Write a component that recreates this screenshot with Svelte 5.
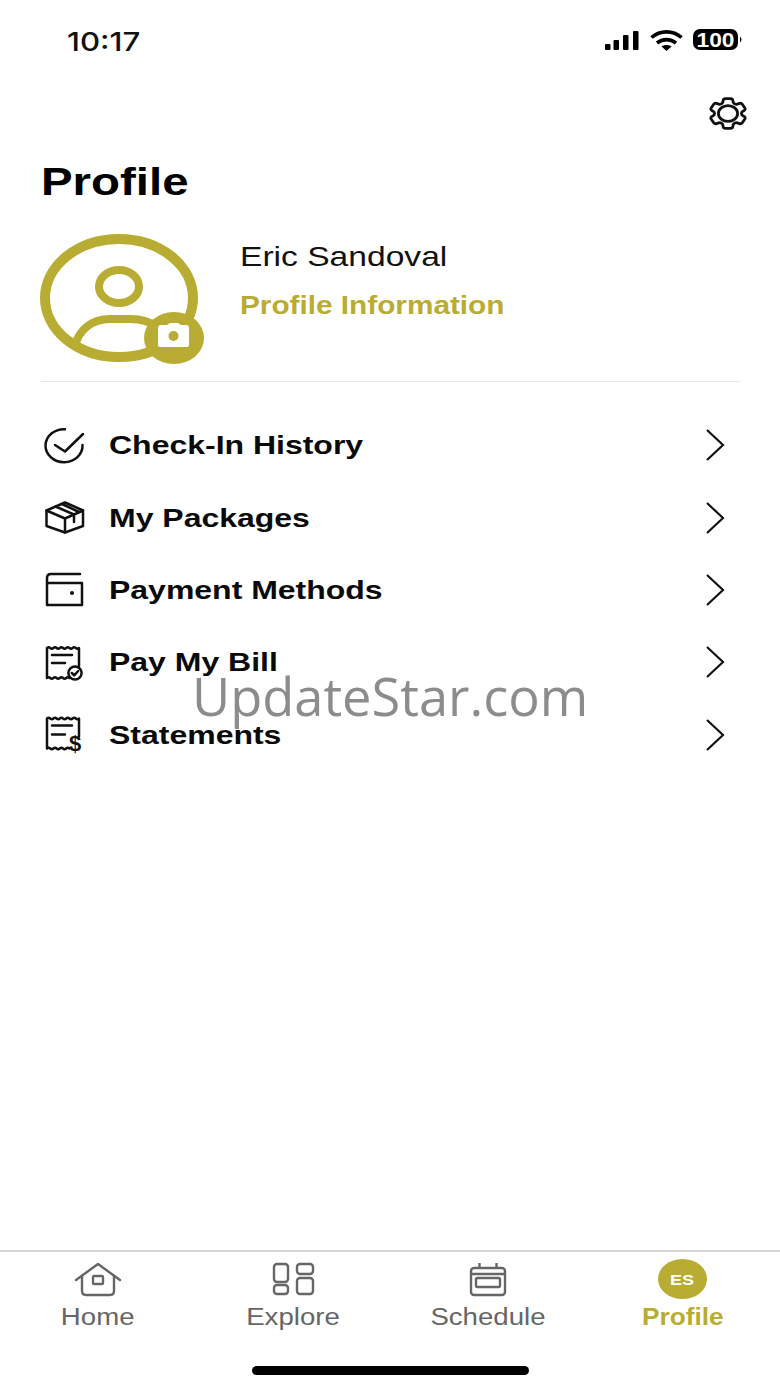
<script>
  const rows = [
    { label: "Check-In History", icon: "check" },
    { label: "My Packages", icon: "box" },
    { label: "Payment Methods", icon: "wallet" },
    { label: "Pay My Bill", icon: "bill" },
    { label: "Statements", icon: "statement" },
  ];

  const receipt =
    "M4 6 q1.600 -1.400 3.200 0 t3.200 0 t3.200 0 t3.200 0 t3.200 0 t3.200 0 t3.200 0 t3.200 0 t3.200 0 t3.200 0 V24 M4 6 V36 q1.600 -1.400 3.200 0 t3.200 0 t3.200 0 t3.200 0 t3.200 0 t3.200 0 t3.200 0";
</script>

{#snippet rowIcon(name)}
  <svg class="row-icon" viewBox="0 0 44 40" width="44" height="40" fill="none" stroke="#111" stroke-width="2.500" stroke-linejoin="round" stroke-linecap="round">
    {#if name === "check"}
      <path d="M22 4.200A18.500 16.500 0 1 0 39.500 20" />
      <path d="M12 20l10 6.500L40 9" />
    {:else if name === "box"}
      <path d="M22 4.500L40 12.500V28L22 34.500L3.500 28V12.500Z" />
      <path d="M3.500 12.500L22 20.500L40 12.500M22 20.500V34.500" />
      <path d="M12.500 8.500L31 16.500V24M19 6L36 14" />
    {:else if name === "wallet"}
      <path d="M37 4H8Q4 4 4 8V35H39V13H4" />
      <circle cx="29" cy="23" r="2" fill="#111" stroke="none" />
    {:else if name === "bill"}
      <path d={receipt} />
      <path d="M9 13H29M9 21H22" />
      <circle cx="32" cy="31" r="6.600" />
      <path d="M28.800 31l2.400 2.400l4 -4.400" />
    {:else}
      <g transform="translate(0 -2.500)">
        <path d={receipt} />
        <path d="M9 13H29M9 22H22" />
      </g>
      <text class="dollar" x="32" y="36" text-anchor="middle">$</text>
    {/if}
  </svg>
{/snippet}

<div class="page">
  <div class="status">
    <span class="time"><span class="wide">10:17</span></span>
    <svg class="status-icons" viewBox="0 0 140 24" width="140" height="24">
      <rect x="0" y="15" width="5.500" height="6" rx="1" />
      <rect x="8.500" y="11" width="5.500" height="10" rx="1" />
      <rect x="18" y="6" width="5.500" height="15" rx="1" />
      <rect x="28" y="2" width="5.500" height="19" rx="1" />
      <g fill="none" stroke="#000" stroke-width="3.600">
        <path d="M46.500 8.500C55 1 68 1 76.500 8.500" />
        <path d="M52 14C57.500 9.500 65.500 9.500 71 14" />
      </g>
      <path d="M56.500 17.500C59.500 15.500 63.500 15.500 66.500 17.500L61.500 22Z" />
      <rect x="88" y="0" width="45" height="21" rx="7" />
      <path d="M135 7.500Q138 10.500 135 13.500Z" />
      <text class="batt" x="91.500" y="17.500" textLength="38" lengthAdjust="spacingAndGlyphs">100</text>
    </svg>
  </div>

  <div class="top-row">
    <svg viewBox="2 2 20 20" width="40" height="33" preserveAspectRatio="none" fill="none" stroke="#111" stroke-linejoin="round">
      <path vector-effect="non-scaling-stroke" stroke-width="2.800" d="M9.594 3.940c.09-.542.56-.94 1.110-.94h2.593c.55 0 1.020.398 1.110.94l.213 1.281c.063.374.313.686.645.870.074.04.147.083.22.127.325.196.72.257 1.075.124l1.217-.456a1.125 1.125 0 0 1 1.370.49l1.296 2.247a1.125 1.125 0 0 1-.26 1.431l-1.003.827c-.293.241-.438.613-.43.992a7.723 7.723 0 0 1 0 .255c-.008.378.137.75.43.991l1.004.827c.424.35.534.955.26 1.430l-1.298 2.247a1.125 1.125 0 0 1-1.369.491l-1.217-.456c-.355-.133-.75-.072-1.076.124a6.470 6.470 0 0 1-.22.128c-.331.183-.581.495-.644.869l-.213 1.281c-.09.543-.56.94-1.110.94h-2.594c-.55 0-1.019-.398-1.110-.94l-.213-1.281c-.062-.374-.312-.686-.644-.870a6.520 6.520 0 0 1-.22-.127c-.325-.196-.72-.257-1.076-.124l-1.217.456a1.125 1.125 0 0 1-1.369-.49l-1.297-2.247a1.125 1.125 0 0 1 .26-1.431l1.004-.827c.292-.24.437-.613.43-.991a6.932 6.932 0 0 1 0-.255c.007-.38-.138-.751-.43-.992l-1.004-.827a1.125 1.125 0 0 1-.26-1.430l1.297-2.247a1.125 1.125 0 0 1 1.370-.491l1.216.456c.356.133.751.072 1.076-.124.072-.044.146-.086.22-.128.332-.183.582-.495.644-.869l.214-1.280Z" />
      <ellipse vector-effect="non-scaling-stroke" stroke-width="2.800" cx="12" cy="12" rx="4.800" ry="4.800" />
    </svg>
  </div>

  <h1 class="title"><span class="wide">Profile</span></h1>

  <div class="profile">
    <svg class="avatar" viewBox="0 0 164 130" width="164" height="130" fill="none" stroke="#b9ac32">
      <ellipse cx="79" cy="64" rx="74" ry="59" stroke-width="10" />
      <ellipse cx="79" cy="52.500" rx="20" ry="16.500" stroke-width="8" />
      <path d="M35 113C38 96 52 85 70 85H90C100 85 110 87 118 94" stroke-width="8" />
      <ellipse cx="134" cy="104" rx="30" ry="26" fill="#b9ac32" stroke="none" />
      <path d="M118 94Q118 91 121 91H127L130 89H138L141 91H146Q149 91 149 94V111Q149 113 146 113H121Q118 113 118 111Z" fill="#fff" stroke="none" />
      <circle cx="133.500" cy="102" r="5" fill="#b9ac32" stroke="none" />
    </svg>
    <div class="info">
      <div class="name"><span class="wide">Eric Sandoval</span></div>
      <div class="link"><span class="wide">Profile Information</span></div>
    </div>
  </div>

  <div class="divider"></div>

  <div class="list">
    {#each rows as row}
      <div class="row">
        {@render rowIcon(row.icon)}
        <span class="row-label"><span class="wide">{row.label}</span></span>
        <svg class="chev" viewBox="0 0 20 34" width="20" height="34" fill="none" stroke="#111" stroke-width="2.200">
          <path d="M2 2L18 17L2 32" />
        </svg>
      </div>
    {/each}
  </div>

  <nav class="tabs">
    <div class="tab">
      <svg viewBox="0 0 50 40" width="50" height="40" fill="none" stroke="#666" stroke-width="2.400" stroke-linejoin="round" stroke-linecap="round">
        <path d="M3 20L25 4L47 20" />
        <path d="M9 16V31Q9 35 13 35H37Q41 35 41 31V16" />
        <rect x="20" y="16" width="10" height="8" rx="1" />
      </svg>
      <span class="tab-label"><span class="wide">Home</span></span>
    </div>
    <div class="tab">
      <svg viewBox="0 0 50 40" width="50" height="40" fill="none" stroke="#666" stroke-width="2.400">
        <rect x="6" y="4" width="14" height="18" rx="3" />
        <rect x="6" y="25" width="14" height="9" rx="3" />
        <rect x="29" y="4" width="16" height="10" rx="3" />
        <rect x="29" y="18" width="16" height="16" rx="3" />
      </svg>
      <span class="tab-label"><span class="wide">Explore</span></span>
    </div>
    <div class="tab">
      <svg viewBox="0 0 50 40" width="50" height="40" fill="none" stroke="#666" stroke-width="2.400" stroke-linejoin="round">
        <rect x="8" y="8" width="34" height="27" rx="3" />
        <path d="M16.500 3V8M33.500 3V8M8 14H42" />
        <rect x="13" y="18" width="24" height="9" rx="1.500" />
      </svg>
      <span class="tab-label"><span class="wide">Schedule</span></span>
    </div>
    <div class="tab active">
      <div class="tab-badge"><span class="wide">ES</span></div>
      <span class="tab-label"><span class="wide">Profile</span></span>
    </div>
  </nav>

  <div class="home-bar"><div class="indicator"></div></div>

  <div class="watermark">UpdateStar.com</div>
</div>

<style>
  :global(body) {
    margin: 0;
    background: #fff;
  }

  .page {
    position: relative;
    width: 780px;
    height: 1387px;
    display: flex;
    flex-direction: column;
    overflow: hidden;
    background: #fff;
    font-family: "Liberation Sans", Arial, sans-serif;
    color: #0a0a0a;
  }

  .wide {
    display: inline-block;
    transform: scaleX(1.2);
    transform-origin: left center;
    white-space: nowrap;
  }

  .status {
    height: 80px;
    padding: 0 35px 0 67px;
    display: flex;
    align-items: center;
    justify-content: space-between;
    flex: none;
  }

  .time {
    font-family: Inter, sans-serif;
    font-size: 26px;
    font-weight: 500;
    color: #111;
    width: 100px;
    padding-top: 2px;
  }

  .status-icons {
    margin-left: auto;
    margin-top: 2px;
  }

  .batt {
    fill: #fff;
    font-family: "Liberation Sans", sans-serif;
    font-weight: 700;
    font-size: 20px;
  }

  .top-row {
    height: 66px;
    padding-right: 32px;
    display: flex;
    align-items: center;
    justify-content: flex-end;
    flex: none;
  }

  .title {
    margin: 0;
    padding-left: 41px;
    height: 68px;
    line-height: 70px;
    font-size: 39.500px;
    font-weight: 700;
    color: #000;
    flex: none;
  }

  .profile {
    margin-top: 20px;
    padding-left: 40px;
    height: 130px;
    display: flex;
    flex: none;
  }

  .avatar {
    flex: none;
    overflow: visible;
  }

  .info {
    margin-left: 36px;
    padding-top: 5px;
    display: flex;
    flex-direction: column;
  }

  .name {
    height: 36px;
    line-height: 36px;
    font-size: 28px;
    color: #111;
  }

  .link {
    margin-top: 12px;
    height: 36px;
    line-height: 36px;
    font-size: 25px;
    font-weight: 700;
    color: #b9ac32;
  }

  .link .wide {
    transform: scaleX(1.19);
  }

  .divider {
    margin: 17px 40px 0 41px;
    height: 1px;
    background: #e6e6e6;
    flex: none;
  }

  .list {
    margin-top: 27px;
    flex: none;
  }

  .row {
    height: 72.400px;
    padding-left: 43px;
    padding-right: 55px;
    display: flex;
    align-items: center;
  }

  .row-icon {
    flex: none;
  }

  .row-label {
    margin-left: 22px;
    padding-top: 1px;
    font-size: 26px;
    font-weight: 700;
    color: #0a0a0a;
    flex: 1;
  }

  .row-label .wide {
    transform: scaleX(1.23);
  }

  .chev {
    flex: none;
  }

  .dollar {
    fill: #111;
    stroke: none;
    font-family: "Liberation Sans", sans-serif;
    font-weight: 700;
    font-size: 22px;
  }

  .tabs {
    margin-top: auto;
    border-top: 2px solid #d6d6d6;
    height: 88px;
    display: grid;
    grid-template-columns: repeat(4, 195px);
    flex: none;
  }

  .tab {
    display: flex;
    flex-direction: column;
    align-items: center;
    padding-top: 8px;
  }

  .tab svg {
    flex: none;
    height: 40px;
  }

  .tab-label {
    margin-top: 1px;
    height: 32px;
    line-height: 32px;
    font-size: 23px;
    color: #666;
    width: max-content;
  }

  .tab-label .wide,
  .tab-badge .wide {
    transform-origin: center;
  }

  .active .tab-label {
    color: #b9ac32;
    font-weight: 700;
  }

  .active .tab-label .wide {
    transform: scaleX(1.14);
  }

  .tab-badge {
    margin-top: -1px;
    margin-bottom: 1px;
    width: 49px;
    height: 40px;
    border-radius: 50%;
    background: #b9ac32;
    color: #fff;
    font-size: 15px;
    font-weight: 700;
    display: flex;
    align-items: center;
    justify-content: center;
  }

  .home-bar {
    height: 47px;
    flex: none;
    display: flex;
    justify-content: center;
    padding-top: 26px;
    box-sizing: border-box;
  }

  .indicator {
    width: 277px;
    height: 9px;
    border-radius: 5px;
    background: #000;
    margin-left: 1px;
  }

  .watermark {
    position: absolute;
    left: 192px;
    top: 660px;
    font-family: "Open Sans", sans-serif;
    font-size: 52.400px;
    line-height: 72px;
    color: rgba(85, 85, 85, 0.68);
    white-space: nowrap;
  }
</style>
